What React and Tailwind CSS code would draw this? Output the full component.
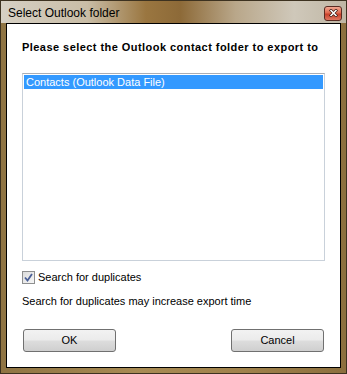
import React, { useState } from "react";

export default function App() {
  const [dupes, setDupes] = useState(true);

  return (
    <div
      className="w-[347px] h-[374px] flex flex-col border border-[#3d3220] bg-[linear-gradient(90deg,#8f7443_0%,#a88b54_40%,#a0824c_70%,#8c6f3e_100%)]"
      style={{ fontFamily: '"Liberation Sans", Arial, sans-serif' }}
    >
      {/* title bar */}
      <div className="h-[22px] flex items-center justify-between pl-[7px] pr-[4px] bg-[linear-gradient(90deg,#d6d0c4_0%,#c9bda6_25%,#9a7640_42%,#8d6a38_52%,#b9a78a_68%,#cfc8ba_85%,#bfb6a4_100%)]">
        <span className="text-[12px] text-black leading-none pt-[2px]">
          Select Outlook folder
        </span>
        <button className="w-[18px] h-[15px] mt-[2px] rounded-[3px] border border-[#5a2b22] bg-[linear-gradient(180deg,#f2a892_0%,#e06a50_45%,#c8402a_55%,#de7660_100%)] flex items-center justify-center">
          <svg width="9" height="8" viewBox="0 0 9 8">
            <path
              d="M1 0.5 L8 7.5 M8 0.5 L1 7.5"
              stroke="#3a1a12"
              strokeWidth="3"
            />
            <path
              d="M1.5 1 L7.5 7 M7.5 1 L1.5 7"
              stroke="#ffffff"
              strokeWidth="1.6"
            />
          </svg>
        </button>
      </div>

      {/* client area */}
      <div className="mx-[5px] mb-[5px] flex-1 border border-black bg-white flex flex-col px-[15px]">
        <div className="pt-[16px] text-[11px] font-bold text-black leading-[14px] tracking-[0.45px]">
          Please select the Outlook contact folder to export to
        </div>

        <div className="mt-[19px] h-[188px] border border-[#c9d1da] border-t-[#abadb3] p-px">
          <div className="h-[14px] bg-[#3399ff] text-white text-[11px] leading-[14px] pl-[2px]">
            Contacts (Outlook Data File)
          </div>
        </div>

        <label className="mt-[10px] flex items-center gap-[3px] text-[11px] text-black leading-none cursor-default">
          <span
            onClick={() => setDupes(!dupes)}
            className="w-[13px] h-[13px] border border-[#8e8f8f] bg-[linear-gradient(135deg,#dcdcdc,#f6f6f6)] flex items-center justify-center"
          >
            {dupes && (
              <svg width="9" height="9" viewBox="0 0 9 9">
                <path
                  d="M1 4.5 L3.5 7.5 L8 1"
                  fill="none"
                  stroke="#4a5f97"
                  strokeWidth="1.8"
                />
              </svg>
            )}
          </span>
          Search for duplicates
        </label>

        <div className="mt-[12px] text-[11px] text-black leading-none">
          Search for duplicates may increase export time
        </div>

        <div className="mt-[22px] flex justify-between px-px">
          <button className="w-[93px] h-[23px] rounded-[3px] border border-[#707070] bg-[linear-gradient(180deg,#f2f2f2_0%,#ebebeb_48%,#dddddd_52%,#cfcfcf_100%)] text-[11px] text-black">
            OK
          </button>
          <button className="w-[93px] h-[23px] rounded-[3px] border border-[#707070] bg-[linear-gradient(180deg,#f2f2f2_0%,#ebebeb_48%,#dddddd_52%,#cfcfcf_100%)] text-[11px] text-black">
            Cancel
          </button>
        </div>
      </div>
    </div>
  );
}
